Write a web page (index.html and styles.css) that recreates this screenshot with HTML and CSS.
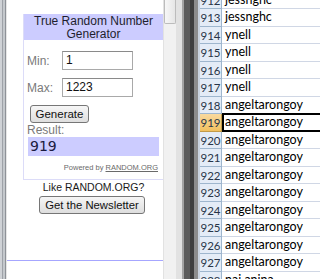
FILE: index.html
```html
<!DOCTYPE html>
<html>
<head>
<meta charset="utf-8">
<link rel="stylesheet" href="styles.css">
</head>
<body>
<div class="frame-edge"></div>
<div class="panel">
  <div class="panel-content">
    <div class="rng">
      <div class="widget">
        <div class="widget-head">True Random Number<br>Generator</div>
        <div class="widget-body">
          <div class="field"><span class="lbl">Min:</span><span class="input">1</span></div>
          <div class="field second"><span class="lbl">Max:</span><span class="input">1223</span></div>
          <div class="btn gen">Generate</div>
          <div class="lbl result-lbl">Result:</div>
          <div class="result">919</div>
          <div class="powered">Powered by <span class="u">RANDOM.ORG</span></div>
        </div>
      </div>
      <div class="like">Like RANDOM.ORG?</div>
      <div class="btn news">Get the Newsletter</div>
    </div>
  </div>
</div>
<div class="vscroll"><div class="thumb"></div></div>
<div class="splitter"></div>
<div class="sheet">
  <div class="row"><div class="num">912</div><div class="cell">jessnghc</div></div>
  <div class="row"><div class="num">913</div><div class="cell">jessnghc</div></div>
  <div class="row"><div class="num">914</div><div class="cell">ynell</div></div>
  <div class="row"><div class="num">915</div><div class="cell">ynell</div></div>
  <div class="row"><div class="num">916</div><div class="cell">ynell</div></div>
  <div class="row"><div class="num">917</div><div class="cell">ynell</div></div>
  <div class="row"><div class="num">918</div><div class="cell">angeltarongoy</div></div>
  <div class="row active"><div class="num">919</div><div class="cell">angeltarongoy</div></div>
  <div class="row"><div class="num">920</div><div class="cell">angeltarongoy</div></div>
  <div class="row"><div class="num">921</div><div class="cell">angeltarongoy</div></div>
  <div class="row"><div class="num">922</div><div class="cell">angeltarongoy</div></div>
  <div class="row"><div class="num">923</div><div class="cell">angeltarongoy</div></div>
  <div class="row"><div class="num">924</div><div class="cell">angeltarongoy</div></div>
  <div class="row"><div class="num">925</div><div class="cell">angeltarongoy</div></div>
  <div class="row"><div class="num">926</div><div class="cell">angeltarongoy</div></div>
  <div class="row"><div class="num">927</div><div class="cell">angeltarongoy</div></div>
  <div class="row"><div class="num">928</div><div class="cell">nai anina</div></div>
</div>
</body>
</html>
```

FILE: styles.css
```css
html, body {
  margin: 0;
  padding: 0;
  width: 320px;
  height: 279px;
  overflow: hidden;
  background: #fff;
}
body {
  display: flex;
  font-family: "Liberation Sans", Arial, sans-serif;
}
.frame-edge {
  width: 7px;
  flex: none;
  background: linear-gradient(to right, #cfd2d6 0 2px, #9ea2a8 2px 3px, #c4c8cc 3px 5px, #8e9298 5px 6px, #e6e6e6 6px 7px);
}
.panel {
  width: 156px;
  flex: none;
  overflow: hidden;
}
.panel-content {
  height: 261px;
  box-sizing: border-box;
  border-bottom: 1px solid #a6a6ff;
  padding: 14px 0 0 16px;
}
.rng {
  width: 141px;
  display: flex;
  flex-direction: column;
}
.widget {
  border: 1px solid #dcdcf8;
  border-top: 0;
}
.widget-head {
  background: #ccccff;
  height: 26px;
  box-sizing: border-box;
  padding-top: 1px;
  text-align: center;
  font-size: 12px;
  line-height: 12.5px;
  color: #1e1e2e;
}
.widget-body {
  padding: 0 4px 7px 3px;
  display: flex;
  flex-direction: column;
}
.field {
  display: flex;
  align-items: center;
  margin-top: 11px;
  height: 19px;
}
.field.second {
  margin-top: 8px;
}
.lbl {
  color: #7a7a7a;
  font-size: 12px;
  width: 35px;
}
.input {
  width: 71px;
  height: 19px;
  box-sizing: border-box;
  border: 1px solid #a9a9a9;
  border-top-color: #8a8a8a;
  padding: 0 3px;
  font-size: 12px;
  line-height: 17px;
  color: #111;
}
.btn {
  box-sizing: border-box;
  border: 1px solid #767676;
  border-radius: 3px;
  background: linear-gradient(#f6f6f6, #dedede);
  color: #111;
  text-align: center;
}
.gen {
  margin: 8px 0 0 3px;
  width: 59px;
  height: 18px;
  font-size: 11.5px;
  line-height: 16px;
}
.result-lbl {
  height: 14px;
  line-height: 15px;
  width: auto;
}
.result {
  margin-left: 1px;
  height: 19px;
  background: #ccccff;
  font-family: "DejaVu Sans", Verdana, sans-serif;
  font-size: 14px;
  line-height: 19px;
  padding-left: 2px;
  color: #1a1a40;
}
.powered {
  margin-top: 7px;
  text-align: right;
  font-size: 7.5px;
  line-height: 9px;
  color: #6a6a6a;
  padding-right: 1px;
}
.u {
  text-decoration: underline;
}
.like {
  text-align: center;
  font-size: 10.5px;
  line-height: 13px;
  height: 13px;
  color: #1a1a1a;
  margin-top: 1px;
}
.news {
  align-self: center;
  margin-top: 2px;
  width: 106px;
  height: 18px;
  font-size: 11.3px;
  line-height: 16px;
  margin-right: 3px;
}
.vscroll {
  width: 13px;
  flex: none;
  background: #f1f1f1;
  border-left: 1px solid #e2e2e2;
  box-sizing: border-box;
}
.thumb {
  height: 24px;
  background: linear-gradient(to right, #f7f7f7, #e6e6e6);
  border: 1px solid #bcbcbc;
  border-top: 0;
  border-radius: 0 0 2px 2px;
  box-sizing: border-box;
}
.splitter {
  width: 24px;
  flex: none;
  background: linear-gradient(to right, #e2e2e2 0 6px, #a4a4a4 6px 8px, #5c5c5c 8px 14px, #3e3e3e 14px 18px, #8c8c8c 18px 22px, #c9d3df 22px 24px);
}
.sheet {
  width: 120px;
  flex: none;
  margin-top: -8.5px;
  display: flex;
  flex-direction: column;
}
.row {
  display: flex;
  height: 17.5px;
  flex: none;
}
.num {
  width: 22px;
  flex: none;
  box-sizing: border-box;
  background: #e4ecf7;
  border-right: 1px solid #9eb6ce;
  border-bottom: 1px solid #9eb6ce;
  font-family: Lato, "Liberation Sans", sans-serif;
  font-size: 11.5px;
  line-height: 17px;
  text-align: center;
  color: #283548;
}
.cell {
  flex: 1;
  box-sizing: border-box;
  border-bottom: 1px solid #d0d7e5;
  font-family: Lato, "Liberation Sans", sans-serif;
  font-size: 12.5px;
  line-height: 16px;
  padding-left: 3px;
  color: #000;
  white-space: nowrap;
}
.row.active .num {
  background: linear-gradient(#f9d99f, #f1c15f);
  border-right-color: #c29b49;
  border-bottom-color: #c29b49;
}
.row.active .cell {
  position: relative;
}
.row.active .cell::after {
  content: "";
  position: absolute;
  left: 0;
  top: -1px;
  right: -6px;
  bottom: -1px;
  border: 2px solid #000;
}
```
